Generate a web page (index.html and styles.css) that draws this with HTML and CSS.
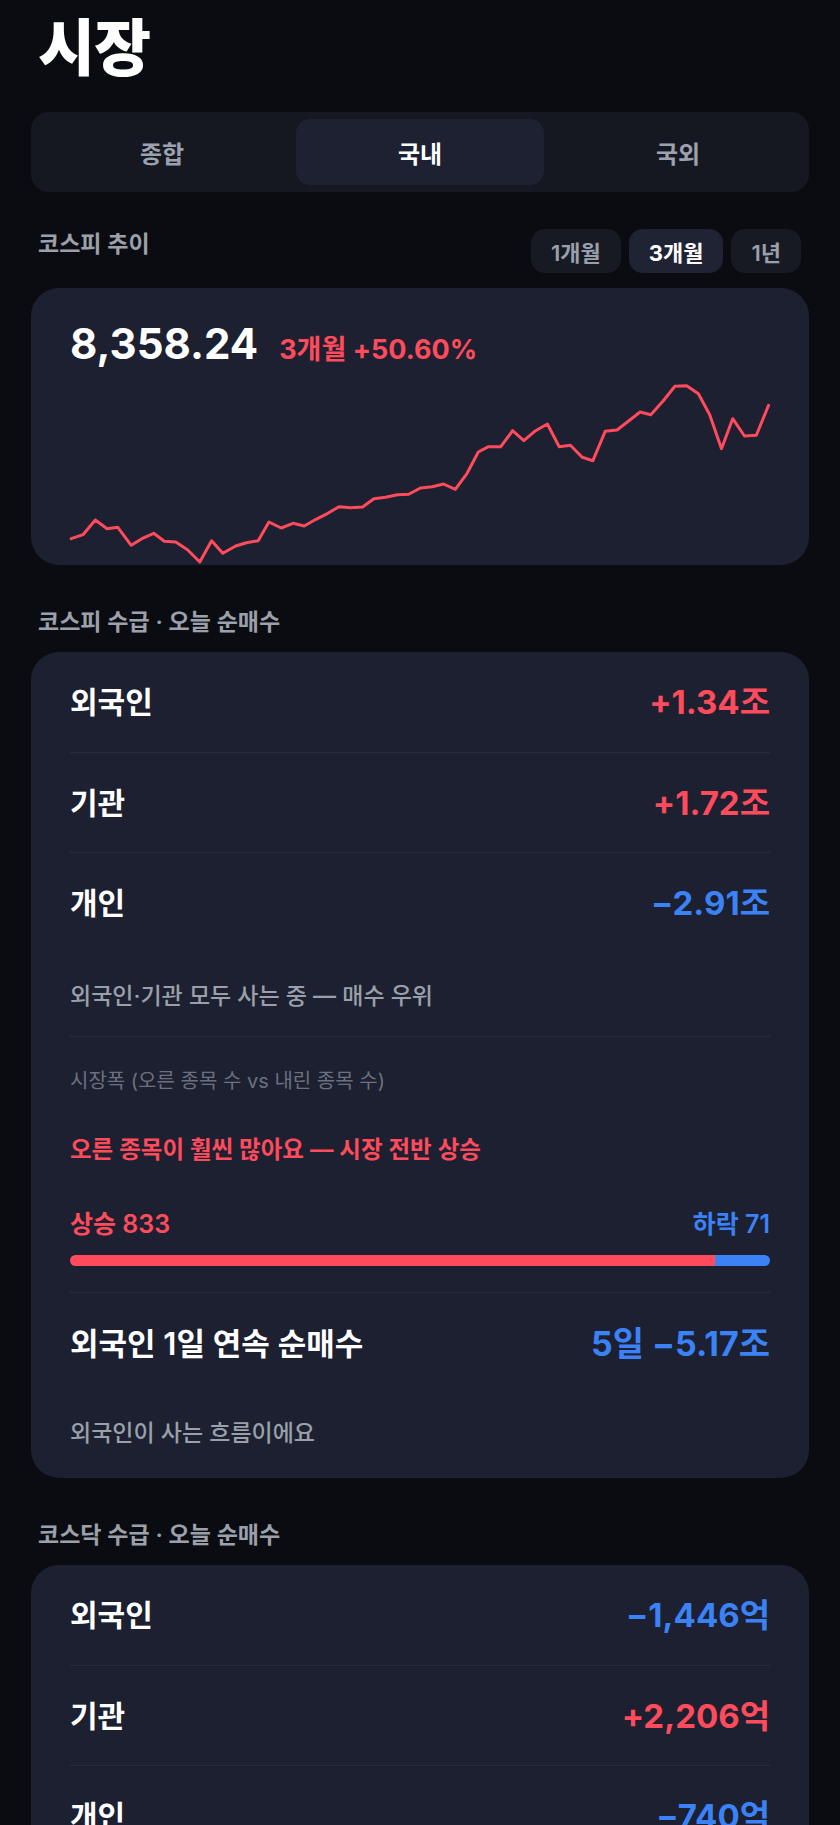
FILE: index.html
```html
<!DOCTYPE html>
<html lang="ko">
<head>
  <meta charset="UTF-8">
  <meta name="viewport" content="width=device-width, initial-scale=1.0">
  <title>시장</title>
  <link rel="stylesheet" href="styles.css">
</head>
<body>
  <main class="page">
    <h1 class="title">시장</h1>

    <!-- market tabs -->
    <nav class="segment">
      <button class="segment-tab">종합</button>
      <button class="segment-tab active">국내</button>
      <button class="segment-tab">국외</button>
    </nav>

    <div class="section-head">
      <h2 class="label">코스피 추이</h2>
      <div class="periods">
        <button class="period">1개월</button>
        <button class="period active">3개월</button>
        <button class="period">1년</button>
      </div>
    </div>

    <section class="card chart-card">
      <div class="chart-head">
        <span class="index-value">8,358.24</span>
        <span class="index-change up">3개월 +50.60%</span>
      </div>
      <svg class="chart" viewBox="0 0 702 184" width="702" height="184">
        <polyline fill="none" stroke="#ff4b5c" stroke-width="3" stroke-linejoin="round" stroke-linecap="round"
          points="2.2,158.7 14,154.7 26.3,140 38.1,148.7 48.8,147.3 62.2,165.3 72.9,158.7 84.7,153.3 95.4,161.3 106.7,162 118.5,169.7 130.8,182 142.6,160.7 153.8,173.3 166.7,166 177.4,162.7 189.2,160.7 199.9,142 212.2,148 224,143.3 235.2,146 247,139.3 258.8,133.3 270,126.7 281.8,127.7 293.6,127 304.9,118.7 316.6,117.3 328.4,114.7 339.7,114.3 351.5,108 363.2,106.7 374.5,104 386.3,109.3 398.1,93.3 409.3,72 419.5,66.7 431.8,66.7 443.6,50.7 454.8,60.7 466.6,50.7 478.4,44 490.2,66.7 501.4,65.3 513.2,77.3 523.9,80.7 536.2,51.3 548,50 559.3,41.3 571.1,32 581.8,34.7 594.1,21 605.9,6.3 617.7,5.7 629.4,13.7 640.7,34.7 652.5,68.7 663.7,38.7 675.5,56 687.3,55.3 699.6,25.3"/>
      </svg>
    </section>

    <h2 class="label section-label">코스피 수급 · 오늘 순매수</h2>
    <section class="card flow-card">
      <div class="flow-row">
        <span class="flow-name">외국인</span>
        <span class="flow-value up">+1.34조</span>
      </div>
      <div class="flow-row">
        <span class="flow-name">기관</span>
        <span class="flow-value up">+1.72조</span>
      </div>
      <div class="flow-row">
        <span class="flow-name">개인</span>
        <span class="flow-value down">−2.91조</span>
      </div>
      <p class="flow-note">외국인·기관 모두 사는 중 — 매수 우위</p>

      <div class="breadth">
        <p class="breadth-title">시장폭 (오른 종목 수 vs 내린 종목 수)</p>
        <p class="breadth-summary up">오른 종목이 훨씬 많아요 — 시장 전반 상승</p>
        <div class="breadth-counts">
          <span class="up">상승 833</span>
          <span class="down">하락 71</span>
        </div>
        <div class="breadth-bar">
          <div class="bar-up" style="width: 92.15%"></div>
          <div class="bar-down"></div>
        </div>
      </div>

      <div class="streak">
        <div class="flow-row streak-row">
          <span class="flow-name">외국인 1일 연속 순매수</span>
          <span class="flow-value down">5일 −5.17조</span>
        </div>
        <p class="streak-note">외국인이 사는 흐름이에요</p>
      </div>
    </section>

    <h2 class="label section-label">코스닥 수급 · 오늘 순매수</h2>
    <section class="card flow-card">
      <div class="flow-row">
        <span class="flow-name">외국인</span>
        <span class="flow-value down">−1,446억</span>
      </div>
      <div class="flow-row">
        <span class="flow-name">기관</span>
        <span class="flow-value up">+2,206억</span>
      </div>
      <div class="flow-row">
        <span class="flow-name">개인</span>
        <span class="flow-value down">−740억</span>
      </div>
    </section>
  </main>
</body>
</html>
```

FILE: styles.css
```css
body {
  margin: 0;
  background: #0b0c11;
  color: #ffffff;
  font-family: Inter, "Noto Sans CJK KR", sans-serif;
}

.page {
  padding: 0 31px;
}

.title {
  margin: 12px 0 0 7px;
  font-size: 62px;
  line-height: 74px;
  font-weight: 800;
  letter-spacing: -1px;
}

.segment {
  display: flex;
  gap: 10px;
  margin-top: 26px;
  padding: 7px;
  background: #151821;
  border-radius: 18px;
}

.segment-tab {
  flex: 1;
  height: 66px;
  border: none;
  border-radius: 14px;
  background: transparent;
  color: #9ca1ad;
  font-family: inherit;
  font-size: 24px;
  font-weight: 600;
}

.segment-tab.active {
  background: #1d2131;
  color: #ffffff;
  font-weight: 700;
}

.section-head {
  display: flex;
  justify-content: space-between;
  align-items: center;
  margin-top: 37px;
}

.label {
  margin: 0;
  padding-left: 7px;
  color: #9ba0ab;
  font-size: 23px;
  line-height: 28px;
  font-weight: 600;
}

.section-head .label {
  margin-bottom: 14px;
}

.periods {
  display: flex;
  gap: 8px;
  padding-right: 8px;
}

.period {
  height: 44px;
  padding: 0 20px;
  border: none;
  border-radius: 14px;
  background: #171a23;
  color: #9aa0ab;
  font-family: inherit;
  font-size: 22px;
  font-weight: 600;
}

.period.active {
  background: #1f2333;
  color: #ffffff;
  font-weight: 700;
}

.card {
  background: #1c2030;
  border-radius: 28px;
}

.up {
  color: #ff4b5c;
}

.down {
  color: #3b82f6;
}

.chart-card {
  margin-top: 15px;
  padding: 35px 0 1px 38px;
  overflow: hidden;
}

.chart-head {
  display: flex;
  align-items: baseline;
  gap: 21px;
  padding-left: 1px;
}

.index-value {
  font-size: 42px;
  line-height: 42px;
  font-weight: 700;
}

.index-change {
  font-size: 27px;
  font-weight: 700;
}

.chart {
  display: block;
  margin-top: 13px;
}

.section-label {
  margin-top: 43px;
  margin-bottom: 16px;
}

.flow-card {
  padding: 0 39px;
}

.flow-row {
  display: flex;
  justify-content: space-between;
  align-items: center;
  box-sizing: border-box;
  height: 100px;
  padding-bottom: 4px;
}

.flow-row + .flow-row {
  border-top: 1px solid #282c39;
}

.flow-name {
  font-size: 30px;
  font-weight: 600;
}

.flow-value {
  font-size: 33px;
  font-weight: 700;
}

.streak-row .flow-name {
  font-size: 31px;
}

.streak-row .flow-value {
  font-size: 34px;
}

.flow-note {
  display: flex;
  align-items: center;
  height: 84px;
  margin: 0;
  color: #9aa0aa;
  font-size: 23px;
  font-weight: 500;
}

.breadth {
  border-top: 1px solid #282c39;
  padding: 30px 0 26px;
}

.breadth-title {
  margin: 0;
  color: #6b7080;
  font-size: 20px;
  line-height: 28px;
}

.breadth-summary {
  margin: 41px 0 0;
  font-size: 23.5px;
  line-height: 28px;
  font-weight: 600;
}

.breadth-counts {
  display: flex;
  justify-content: space-between;
  margin-top: 46px;
  font-size: 25px;
  line-height: 28px;
  font-weight: 600;
}

.breadth-bar {
  display: flex;
  height: 11px;
  margin-top: 17px;
  border-radius: 6px;
  overflow: hidden;
}

.bar-up {
  background: #ff4b5c;
}

.bar-down {
  flex: 1;
  background: #3b82f6;
}

.streak {
  border-top: 1px solid #282c39;
  padding-bottom: 31px;
}

.streak-note {
  margin: 26px 0 0;
  color: #9aa0aa;
  font-size: 23px;
  line-height: 28px;
  font-weight: 500;
}
```
